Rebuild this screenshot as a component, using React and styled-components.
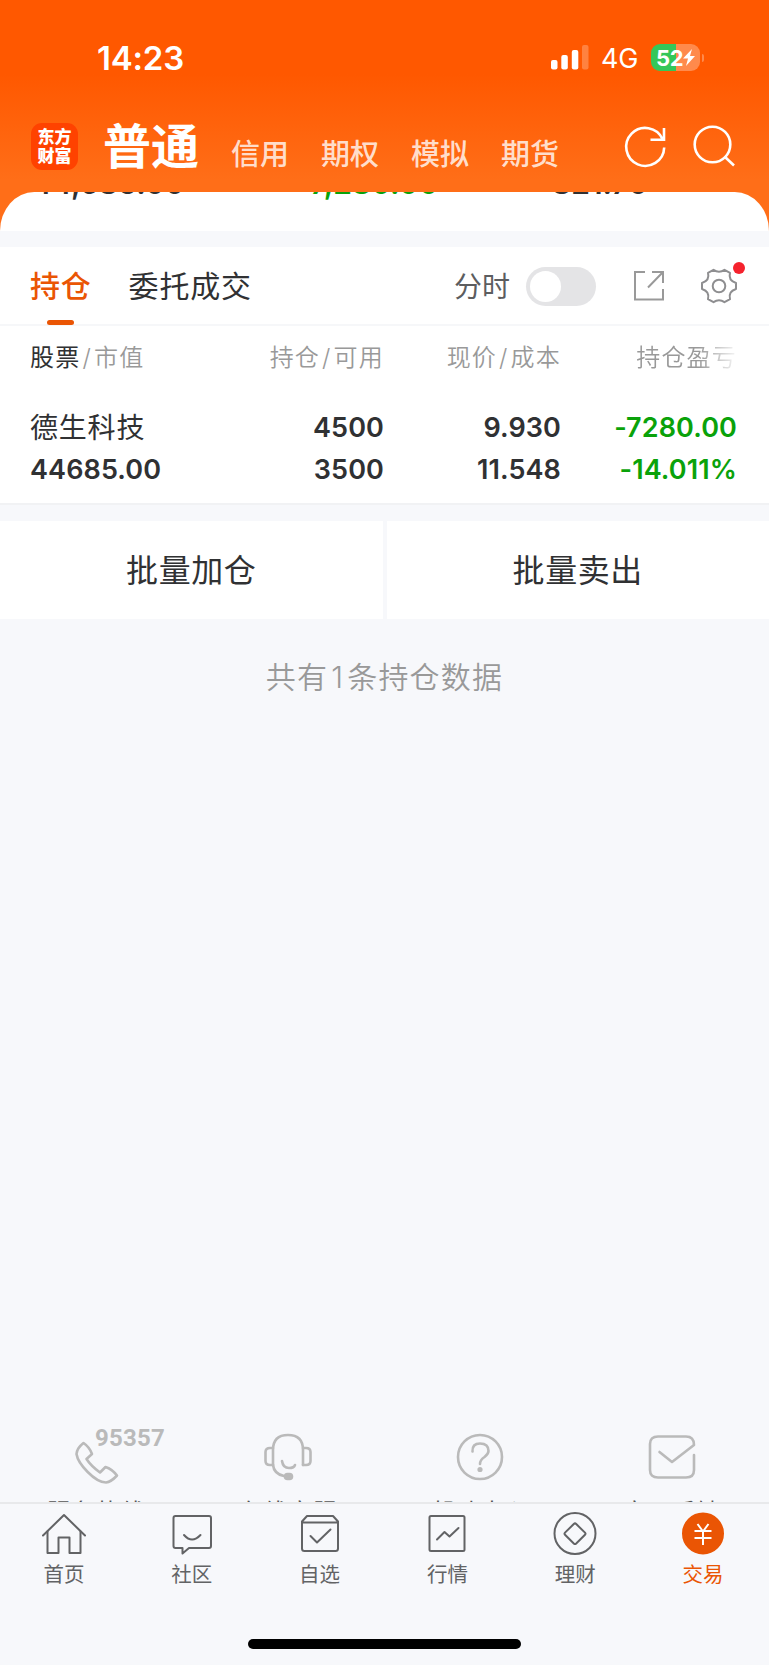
import React from 'react'
import styled, { createGlobalStyle } from 'styled-components'

const GlobalStyle = createGlobalStyle`
  * {
    box-sizing: border-box;
  }
  body {
    margin: 0;
    background: #f7f8fb;
    color: #303133;
    font-family: Inter, "Noto Sans CJK SC", sans-serif;
  }
  svg {
    display: block;
    flex-shrink: 0;
    overflow: visible;
  }
`

const Screen = styled.div`
  width: 769px;
  height: 1665px;
  display: flex;
  flex-direction: column;
  overflow: hidden;
`

const Header = styled.header`
  height: 231px;
  flex-shrink: 0;
  background: linear-gradient(#ff5800 0, #ff5800 74px, #ff6e18 180px, #ff6e18 100%);
  color: #fff;
`

const StatusBar = styled.div`
  height: 112px;
  padding: 3px 65px 0 97px;
  display: flex;
  align-items: center;
  justify-content: space-between;
`

const Time = styled.span`
  font-size: 33px;
  font-weight: 600;
  line-height: 40px;
  letter-spacing: -0.2px;
`

const StatusIcons = styled.div`
  display: flex;
  align-items: center;
`

const Network = styled.span`
  margin: 2px 13px 0 12px;
  width: 37px;
  font-size: 27px;
  line-height: 32px;
  letter-spacing: -0.3px;
`

const Battery = styled.div`
  width: 49px;
  height: 27px;
  border-radius: 9px;
  padding: 0 4px 0 5px;
  display: flex;
  align-items: center;
  background: linear-gradient(90deg, #34c759 52%, #ff8a4c 52%);
  font-size: 22px;
  font-weight: 700;
  letter-spacing: -0.3px;
`

const BatteryCap = styled.i`
  width: 2px;
  height: 8px;
  margin-left: 2px;
  border-radius: 0 3px 3px 0;
  background: #ff8a4c;
`

const Nav = styled.nav`
  height: 80px;
  padding: 0 33px 0 31px;
  display: flex;
  align-items: flex-start;
`

const Logo = styled.div`
  width: 47px;
  height: 47px;
  margin-top: 11px;
  border-radius: 11px;
  background: #ff4200;
  display: flex;
  flex-direction: column;
  align-items: center;
  justify-content: center;
  font-size: 17px;
  font-weight: 900;
  line-height: 19px;
`

const NavTitle = styled.h1`
  margin: 2px 0 0 25px;
  width: 128px;
  font-size: 48px;
  font-weight: 700;
  line-height: 66px;
`

const NavItem = styled.span`
  width: 90px;
  margin-top: 22px;
  font-size: 29px;
  font-weight: 500;
  line-height: 42px;
  color: rgba(255, 255, 255, 0.8);
`

const NavActions = styled.div`
  margin: 13px 0 0 auto;
  display: flex;
  gap: 26px;
`

const Sheet = styled.div`
  height: 39px;
  padding: 0 32px;
  background: #fff;
  border-radius: 36px 36px 0 0 / 41px 41px 0 0;
  overflow: hidden;
`

const Totals = styled.div`
  margin-top: -27px;
  display: grid;
  grid-template-columns: 265px 255px 1fr;
  font-size: 30px;
  font-weight: 600;
  line-height: 36px;
  color: #303133;
`

const Amount = styled.span`
  color: ${props => props.$down ? '#0aa20a' : 'inherit'};
`

const Panel = styled.section`
  background: #fff;
  margin-top: 16px;
  flex-shrink: 0;
`

const Toolbar = styled.div`
  height: 79px;
  padding: 0 32px 0 30px;
  display: flex;
  align-items: center;
  border-bottom: 2px solid #f6f7f9;
`

const Tab = styled.div`
  height: 79px;
  margin-right: 37px;
  display: flex;
  flex-direction: column;
  align-items: center;
  justify-content: space-between;
  font-size: 30px;
  font-weight: ${props => props.$active ? 500 : 400};
  line-height: 44px;
  letter-spacing: 0.8px;
  padding-top: 18px;
  color: ${props => props.$active ? '#ea5504' : '#303133'};
  &::after {
    content: "";
    width: 27px;
    height: 5px;
    border-radius: 3px;
    background: ${props => props.$active ? '#ea5504' : 'transparent'};
  }
`

const ToolbarRight = styled.div`
  margin-left: auto;
  padding-top: 1px;
  display: flex;
  align-items: center;
`

const SwitchLabel = styled.span`
  font-size: 28px;
  line-height: 40px;
  color: #5c5d5f;
  margin-right: 16px;
  padding-top: 1px;
`

const Switch = styled.div`
  width: 70px;
  height: 39px;
  padding: 4px;
  margin-right: 37px;
  border-radius: 20px;
  background: #e4e4e6;
  &::before {
    content: "";
    display: block;
    width: 31px;
    height: 31px;
    border-radius: 50%;
    background: #fff;
  }
`

const SettingsWrap = styled.div`
  position: relative;
  margin-left: 36px;
`

const RedDot = styled.i`
  position: absolute;
  top: -6px;
  right: -8px;
  width: 12px;
  height: 12px;
  border-radius: 50%;
  background: #f5222d;
`

const Table = styled.div`
  height: 179px;
  padding-left: 30px;
  display: grid;
  grid-template-columns: 200px 154px 177px 176px;
  grid-template-rows: 65px 78px;
  border-bottom: 2px solid #f1f2f4;
`

const HeadCell = styled.div`
  padding-top: 14px;
  text-align: ${props => props.$left ? 'left' : 'right'};
  white-space: nowrap;
  font-size: 24px;
  line-height: 36px;
  letter-spacing: 1.2px;
  font-weight: 350;
  color: #999;
  mask-image: ${props => props.$fade ? 'linear-gradient(90deg, #000 78%, transparent 102%)' : 'none'};
  b {
    font-weight: 400;
    color: #303133;
  }
  i {
    font-style: normal;
    margin: 0 2px;
  }
`

const Cell = styled.div`
  padding-top: 16px;
  text-align: ${props => props.$left ? 'left' : 'right'};
  font-size: 27px;
  font-weight: 600;
  line-height: 42px;
  letter-spacing: 0.1px;
  color: ${props => props.$down ? '#0aa20a' : '#303133'};
`

const StockName = styled.div`
  font-size: 28px;
  font-weight: 400;
  letter-spacing: 0.8px;
`

const Actions = styled.div`
  display: flex;
  gap: 4px;
  margin-top: 16px;
  flex-shrink: 0;
`

const ActionButton = styled.button`
  flex: 1;
  height: 98px;
  padding: 0 0 4px;
  border: 0;
  background: #fff;
  color: #303133;
  font-family: inherit;
  font-size: 32px;
  letter-spacing: 0.6px;
`

const Summary = styled.p`
  margin: 36px 0 0;
  text-align: center;
  font-size: 30px;
  font-weight: 350;
  line-height: 44px;
  letter-spacing: 1.2px;
  color: #999;
  span {
    margin: 0 3px;
  }
`

const Services = styled.div`
  height: 86px;
  margin-top: auto;
  padding: 18px 1px 0 0;
  flex-shrink: 0;
  display: flex;
  overflow: hidden;
`

const Service = styled.div`
  flex: 1;
  display: flex;
  flex-direction: column;
  align-items: center;
  color: #bababa;
  span {
    margin-top: 5px;
    font-size: 24px;
    line-height: 36px;
    letter-spacing: 0.8px;
    color: #555;
    white-space: nowrap;
  }
`

const ServiceIcon = styled.div`
  position: relative;
  height: 56px;
  flex-shrink: 0;
`

const Hotline = styled.b`
  position: absolute;
  left: 23px;
  top: -10px;
  font-family: Roboto, sans-serif;
  font-size: 24px;
  line-height: 28px;
  letter-spacing: 0.2px;
`

const TabBar = styled.footer`
  height: 163px;
  flex-shrink: 0;
  border-top: 2px solid #e8e9eb;
  display: flex;
  flex-direction: column;
  justify-content: space-between;
  align-items: center;
  padding-bottom: 16px;
`

const TabRow = styled.div`
  width: 100%;
  padding-right: 2px;
  display: flex;
`

const TabItem = styled.div`
  flex: 1;
  padding-top: 8px;
  display: flex;
  flex-direction: column;
  align-items: center;
  font-size: 20.5px;
  line-height: 30px;
  color: ${props => props.$active ? '#ea5504' : '#626365'};
  svg {
    margin-bottom: 4px;
  }
`

const HomeIndicator = styled.div`
  width: 273px;
  height: 10px;
  border-radius: 5px;
  background: #000;
`

function Icon({ size = 44, width = 2, children }) {
  return (
    <svg
      width={size}
      height={size}
      viewBox={`0 0 ${size} ${size}`}
      fill="none"
      stroke="currentColor"
      strokeWidth={width}
      strokeLinecap="round"
      strokeLinejoin="round"
    >
      {children}
    </svg>
  )
}

const accounts = ['信用', '期权', '模拟', '期货']

const services = [
  {
    name: '服务热线',
    hotline: '95357',
    icon: <path d="M11.500 9 Q5 14 4.500 20 C6 30 23 48.500 34 48.500 Q39 48 45 41.500 Q40 35 33.500 33 L28 38.500 Q19 32 14.500 25 L20 20 Q17.500 13 11.500 9Z" />
  },
  {
    name: '在线客服',
    icon: (
      <>
        <path d="M9 31 V16 Q9 1 24 1 Q39 1 39 16 V31" />
        <path d="M9 14 H6 Q1.500 14 1.500 18 V27 Q1.500 31 6 31 H9 M39 14 H42 Q46.500 14 46.500 18 V27 Q46.500 31 42 31 H39" />
        <path d="M9 31 Q10 40 20 42 M18 27 Q19 34 25 34 Q30 34 31 31" />
        <rect x="21" y="40" width="7" height="5" rx="2.500" fill="currentColor" />
      </>
    )
  },
  {
    name: '帮助中心',
    icon: (
      <>
        <circle cx="24" cy="23" r="22" />
        <path d="M16.500 17.500 Q16 9.500 24 9.500 Q32.500 9.500 32.500 17 Q32.500 20 28.500 23 Q24 26 24 30" />
        <circle cx="24" cy="35.500" r="1.300" fill="currentColor" />
      </>
    )
  },
  {
    name: '意见反馈',
    icon: <path d="M46 21 V36 Q46 43.500 38 43.500 H10 Q2 43.500 2 36 V10 Q2 2.500 10 2.500 H38 Q46 2.500 46 11 L24 28 L11.500 18" />
  }
]

const tabs = [
  {
    name: '首页',
    icon: (
      <>
        <path d="M1 23.500 L22 3 L43 23.500" />
        <path d="M5.500 19.500 V41 H16.500 V25.500 H27.500 V41 H38.500 V19.500" />
      </>
    )
  },
  {
    name: '社区',
    icon: (
      <>
        <path d="M5.500 4 H39 Q41 4 41 6 V34 Q41 36 39 36 H19 L12.500 41.500 V36 H5.500 Q3.500 36 3.500 34 V6 Q3.500 4 5.500 4Z" />
        <path d="M14 23 Q22 32 30.500 23" />
      </>
    )
  },
  {
    name: '自选',
    icon: (
      <>
        <path d="M4 10.500 H40 V36.500 Q40 39 37.500 39 H6.500 Q4 39 4 36.500 V9.500 L9 4 H35 L40 9.500 V11" />
        <path d="M12.500 24 L19 30.500 L32.500 17.500" />
      </>
    )
  },
  {
    name: '行情',
    icon: (
      <>
        <rect x="4.500" y="4" width="35" height="35" rx="1.500" />
        <path d="M12 27.500 L19.500 20 L24.500 24.500 L33.500 16" />
      </>
    )
  },
  {
    name: '理财',
    icon: (
      <>
        <circle cx="22" cy="21.500" r="20.500" />
        <path d="M20.800 12 Q22 10.800 23.200 12 L32 20.600 Q33 21.700 32 22.700 L23.200 31.500 Q22 32.600 20.800 31.500 L12 22.700 Q11 21.700 12 20.600Z" />
      </>
    )
  },
  {
    name: '交易',
    active: true,
    icon: (
      <>
        <circle cx="22" cy="21.500" r="20" fill="currentColor" />
        <path stroke="#fff" strokeLinecap="butt" d="M16.500 12 L22 19.500 L27.500 12 M22 19.500 V33 M13.500 19 H30.500 M13.500 26 H30.500" />
      </>
    )
  }
]

export default function App() {
  return (
    <>
      <GlobalStyle />
      <Screen>
        <Header>
          <StatusBar>
            <Time>14:23</Time>
            <StatusIcons>
              <svg width="38" height="25" fill="#fff">
                <rect x="0" y="15" width="6.500" height="9.500" rx="2" />
                <rect x="10.300" y="10" width="6.500" height="14.500" rx="2" />
                <rect x="20.800" y="5" width="6.500" height="19.500" rx="2" />
                <rect x="31" y="0" width="6.500" height="24.500" rx="2" opacity="0.25" />
              </svg>
              <Network>4G</Network>
              <Battery>
                52
                <svg width="12" height="17" viewBox="0 0 12 17" fill="#fff">
                  <path d="M9 0 L0 9.500 H5 L3 17 L12 7 H7Z" />
                </svg>
              </Battery>
              <BatteryCap />
            </StatusIcons>
          </StatusBar>
          <Nav>
            <Logo>
              <span>东方</span>
              <span>财富</span>
            </Logo>
            <NavTitle>普通</NavTitle>
            {accounts.map(name => <NavItem key={name}>{name}</NavItem>)}
            <NavActions>
              <Icon size={43} width={2.6}>
                <path strokeLinecap="butt" strokeLinejoin="miter" d="M40.200 22.500 A19 19 0 1 1 38.500 14 M40 3 V14.700 H26.500" />
              </Icon>
              <Icon size={43} width={2.6}>
                <circle cx="19.500" cy="19.500" r="17.800" />
                <path strokeLinecap="butt" d="M31.500 31.500 L41 40.500" />
              </Icon>
            </NavActions>
          </Nav>
          <Sheet>
            <Totals>
              <Amount>44,685.00</Amount>
              <Amount $down>-7,280.00</Amount>
              <Amount>821.70</Amount>
            </Totals>
          </Sheet>
        </Header>

        <Panel>
          <Toolbar>
            <Tab $active>持仓</Tab>
            <Tab>委托成交</Tab>
            <ToolbarRight>
              <SwitchLabel>分时</SwitchLabel>
              <Switch />
              <svg width="32" height="32" fill="none" stroke="#999" strokeWidth="2">
                <path d="M12 2 H2 V29.500 H30 V19 M19 2 H30 V13 M30 2 L15 17.500" />
              </svg>
              <SettingsWrap>
                <svg width="36" height="36" viewBox="0 0 36 36" fill="none" stroke="#8e8e90" strokeWidth="2" strokeLinejoin="round">
                  <path d="M12.500 1.800 Q18 5.500 23.500 1.800 L29 4.800 Q27 12.500 35 15 V21 Q27 23.500 29 31.200 L23.500 34.200 Q18 30.500 12.500 34.200 L7 31.200 Q9 23.500 1 21 V15 Q9 12.500 7 4.800Z" />
                  <circle cx="18" cy="18" r="6.300" />
                </svg>
                <RedDot />
              </SettingsWrap>
            </ToolbarRight>
          </Toolbar>
          <Table>
            <HeadCell $left><b>股票</b><i>/</i>市值</HeadCell>
            <HeadCell>持仓<i>/</i>可用</HeadCell>
            <HeadCell>现价<i>/</i>成本</HeadCell>
            <HeadCell $fade>持仓盈亏</HeadCell>
            <Cell $left>
              <StockName>德生科技</StockName>
              <div>44685.00</div>
            </Cell>
            <Cell>
              <div>4500</div>
              <div>3500</div>
            </Cell>
            <Cell>
              <div>9.930</div>
              <div>11.548</div>
            </Cell>
            <Cell $down>
              <div>-7280.00</div>
              <div>-14.011%</div>
            </Cell>
          </Table>
        </Panel>

        <Actions>
          <ActionButton>批量加仓</ActionButton>
          <ActionButton>批量卖出</ActionButton>
        </Actions>
        <Summary>共有<span>1</span>条持仓数据</Summary>

        <Services>
          {services.map(item => (
            <Service key={item.name}>
              <ServiceIcon>
                <Icon size={48} width={2.6}>{item.icon}</Icon>
                {item.hotline && <Hotline>{item.hotline}</Hotline>}
              </ServiceIcon>
              <span>{item.name}</span>
            </Service>
          ))}
        </Services>

        <TabBar>
          <TabRow>
            {tabs.map(item => (
              <TabItem key={item.name} $active={item.active}>
                <Icon>{item.icon}</Icon>
                {item.name}
              </TabItem>
            ))}
          </TabRow>
          <HomeIndicator />
        </TabBar>
      </Screen>
    </>
  )
}
